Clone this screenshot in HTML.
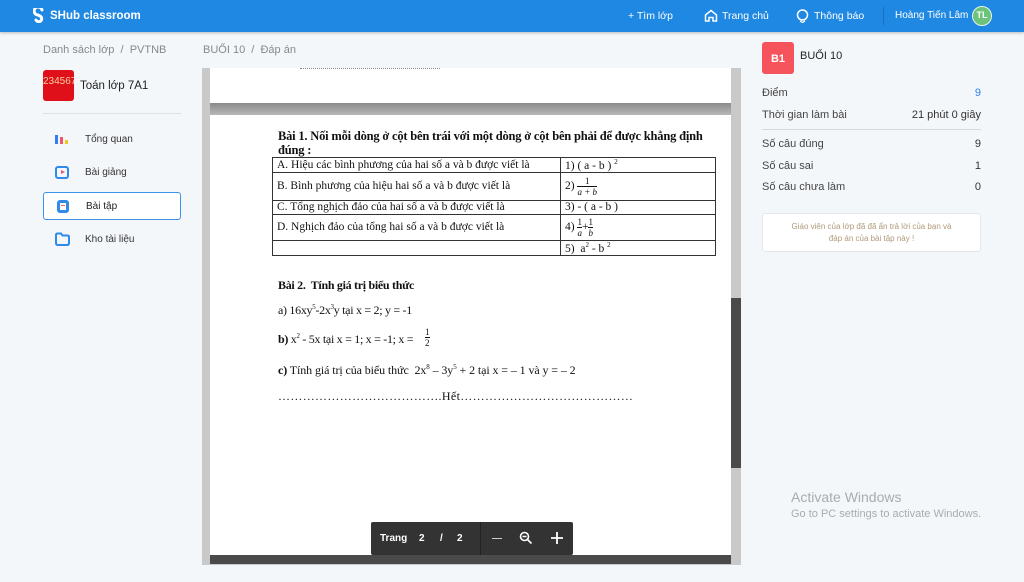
<!DOCTYPE html>
<html><head><meta charset="utf-8"><style>
*{margin:0;padding:0;box-sizing:border-box}
body{width:1024px;height:582px;background:#f4f7fa;font-family:"Liberation Sans",sans-serif;position:relative;overflow:hidden;color:#333}
.hd{position:absolute;left:0;top:0;width:1024px;height:32px;background:#1f88e2;box-shadow:0 1px 3px rgba(0,0,0,.25);color:#fff;font-size:10.5px}
.hd span{position:absolute;top:10px}
.a{position:absolute}
.tnr{font-family:"Liberation Serif",serif;color:#111}
table{border-collapse:collapse}
td{border:1px solid #333;font-size:11.5px;padding:0 4px;font-family:"Liberation Serif",serif;color:#111;letter-spacing:0px;white-space:nowrap}
.nav{position:absolute;left:43px;width:138px;height:28px;font-size:10px;color:#333}
.nav span{position:absolute;left:42px;top:8px}
.row{position:absolute;left:762px;width:219px;font-size:11px;color:#444}
.row b{position:absolute;right:0;font-weight:normal;color:#333}
</style></head><body>
<div class="hd">
<svg class="a" style="left:33px;top:8px" width="12" height="15" viewBox="0 0 12 15"><path d="M9 2 A4 4 0 1 0 5 7 L7 8 A3 3 0 1 1 3 12" stroke="#fff" stroke-width="3" fill="none" stroke-linecap="round"/></svg>
<span style="left:50px;font-size:11.5px;font-weight:bold">SHub classroom</span>
<span style="left:628px">+ Tìm lớp</span>
<svg class="a" style="left:704px;top:9px" width="14" height="13" viewBox="0 0 14 13"><path d="M1.5 6 L7 1.5 L12.5 6 V12 H9 V8.5 H5 V12 H1.5Z" stroke="#fff" stroke-width="1.5" fill="none"/></svg>
<span style="left:722px">Trang chủ</span>
<svg class="a" style="left:796px;top:9px" width="13" height="14" viewBox="0 0 13 14"><circle cx="6.5" cy="6" r="5" stroke="#fff" stroke-width="1.5" fill="none"/><path d="M4 12 L6.5 13.5 L9 12" stroke="#fff" stroke-width="1.3" fill="none"/></svg>
<span style="left:814px">Thông báo</span>
<div class="a" style="left:883px;top:7px;width:1px;height:18px;background:#1a6fc0"></div>
<span style="left:895px;font-size:10px">Hoàng Tiến Lâm</span>
<div class="a" style="left:972px;top:6px;width:20px;height:20px;border-radius:50%;background:#6cc37a;border:1.5px solid #e8f4ea;font-size:9px;font-weight:bold;text-align:center;line-height:17px">TL</div>
</div>

<div class="a" style="left:43px;top:44px;font-size:11px;color:#888">Danh sách lớp &nbsp;/ &nbsp;PVTNB</div>
<div class="a" style="left:203px;top:44px;font-size:11px;color:#888">BUỔI 10 &nbsp;/ &nbsp;Đáp án</div>
<div class="a" style="left:43px;top:70px;width:31px;height:31px;background:#e0101a;border-radius:3px;color:#f2d0a0;font-size:10px;line-height:24px;overflow:hidden">234567</div>
<div class="a" style="left:80px;top:80px;font-size:11.5px;color:#222">Toán lớp 7A1</div>
<div class="a" style="left:43px;top:113px;width:138px;height:1px;background:#dde2e8"></div>

<div class="nav" style="top:126px"><div class="a" style="left:12px;top:9px;width:3px;height:9px;background:#2f7ef0"></div><div class="a" style="left:17px;top:11px;width:3px;height:7px;background:#f0556a"></div><div class="a" style="left:22px;top:14px;width:3px;height:4px;background:#f5c518"></div><span>Tổng quan</span></div>
<div class="nav" style="top:159px"><div class="a" style="left:12px;top:7px;width:14px;height:13px;border:2px solid #2f8ae8;border-radius:3px"></div><div class="a" style="left:18px;top:11px;border-left:4px solid #f0556a;border-top:2.5px solid transparent;border-bottom:2.5px solid transparent"></div><span>Bài giảng</span></div>
<div class="nav" style="top:192px;background:#fff;border:1px solid #3d94ea;border-radius:3px"><div class="a" style="left:13px;top:7px;width:12px;height:13px;background:#2f8ae8;border-radius:3px"></div><div class="a" style="left:16px;top:10px;width:6px;height:7px;background:#fff"></div><div class="a" style="left:17px;top:12px;width:4px;height:1px;background:#f0556a"></div><span style="color:#222">Bài tập</span></div>
<div class="nav" style="top:226px"><svg class="a" style="left:11px;top:6px" width="17" height="15" viewBox="0 0 17 15"><path d="M2 3 Q2 1.5 3.5 1.5 H7 L8.5 3.5 H13.5 Q15 3.5 15 5 V11 Q15 13 13 13 H4 Q2 13 2 11Z" stroke="#2f8ae8" stroke-width="2" fill="none"/></svg><span>Kho tài liệu</span></div>

<!-- viewer -->
<div class="a" style="left:202px;top:68px;width:539px;height:497px;background:#c9c9c9"></div>
<div class="a" style="left:210px;top:68px;width:521px;height:35px;background:#fff"></div>
<div class="a" style="left:300px;top:68px;width:140px;height:2px;border-top:1px dotted #888"></div>
<div class="a" style="left:210px;top:103px;width:521px;height:12px;background:linear-gradient(#8a8a8a,#b8b8b8)"></div>
<div class="a" style="left:210px;top:115px;width:521px;height:440px;background:#fff"></div>
<div class="a" style="left:210px;top:555px;width:521px;height:9px;background:#4a4a4a"></div>
<div class="a" style="left:731px;top:298px;width:10px;height:170px;background:#4a4a4a"></div>

<div class="a tnr" style="left:278px;top:129px;font-size:12.5px;font-weight:bold;line-height:14px;width:460px;letter-spacing:-0.2px">Bài 1. Nối mỗi dòng ở cột bên trái với một dòng ở cột bên phải để được khẳng định<br>đúng :</div>
<table class="a" style="left:272px;top:157px;width:444px">
<tr style="height:13px"><td style="width:288px">A. Hiệu các bình phương của hai số a và b được viết là</td><td>1) ( a - b ) <sup style="font-size:7px">2</sup></td></tr>
<tr style="height:28px"><td>B. Bình phương của hiệu hai số a và b được viết là</td><td>2) <span style="display:inline-block;vertical-align:middle;text-align:center;font-size:9px;line-height:10px"><span style="border-bottom:1px solid #111;display:block;padding:0 2px">1</span><i>a + b</i></span></td></tr>
<tr style="height:14px"><td>C. Tổng nghịch đảo của hai số a và b được viết là</td><td>3) - ( a - b )</td></tr>
<tr style="height:26px"><td>D. Nghịch đảo của tổng hai số a và b được viết là</td><td>4) <span style="display:inline-block;vertical-align:middle;text-align:center;font-size:9px;line-height:10px"><span style="border-bottom:1px solid #111;display:block">1</span><i>a</i></span>+<span style="display:inline-block;vertical-align:middle;text-align:center;font-size:9px;line-height:10px"><span style="border-bottom:1px solid #111;display:block">1</span><i>b</i></span></td></tr>
<tr style="height:14px"><td></td><td>5)&nbsp; a<sup style="font-size:7px">2</sup> - b <sup style="font-size:7px">2</sup></td></tr>
</table>
<div class="a tnr" style="left:278px;top:278px;font-size:12px;font-weight:bold;letter-spacing:-0.3px">Bài 2.&nbsp; Tính giá trị biểu thức</div>
<div class="a tnr" style="left:278px;top:303px;font-size:12px;letter-spacing:-0.3px">a) 16xy<sup style="font-size:7px">5</sup>-2x<sup style="font-size:7px">3</sup>y tại x = 2; y = -1</div>
<div class="a tnr" style="left:278px;top:332px;font-size:12px;letter-spacing:-0.3px"><b>b)</b> x<sup style="font-size:7px">2</sup> - 5x tại x = 1; x = -1; x = </div>
<div class="a tnr" style="left:425px;top:327px;font-size:9px;text-align:center;line-height:10px"><div style="border-bottom:1px solid #111">1</div>2</div>
<div class="a tnr" style="left:278px;top:363px;font-size:12px;letter-spacing:-0.1px"><b>c)</b> Tính giá trị của biểu thức&nbsp; 2x<sup style="font-size:7px">8</sup> – 3y<sup style="font-size:7px">5</sup> + 2 tại x = – 1 và y = – 2</div>
<div class="a tnr" style="left:278px;top:389px;font-size:12px;letter-spacing:0.35px;white-space:nowrap">………………………………….Hết……………………………………</div>

<div class="a" style="left:371px;top:522px;width:202px;height:33px;background:#333;border-radius:2px;color:#fff;font-size:10px;font-weight:bold">
<span class="a" style="left:9px;top:11px">Trang</span><span class="a" style="left:48px;top:11px">2</span><span class="a" style="left:69px;top:11px">/</span><span class="a" style="left:86px;top:11px">2</span>
<div class="a" style="left:109px;top:0;width:1px;height:33px;background:#222"></div>
<div class="a" style="left:121px;top:16px;width:10px;height:1px;background:#ccc"></div>
<svg class="a" style="left:148px;top:9px" width="14" height="14" viewBox="0 0 14 14"><circle cx="5.5" cy="5.5" r="4" stroke="#fff" stroke-width="1.6" fill="none"/><path d="M8.5 8.5 L12.5 12.5 M3.5 5.5 H7.5" stroke="#fff" stroke-width="1.6"/></svg>
<svg class="a" style="left:180px;top:10px" width="12" height="12" viewBox="0 0 12 12"><path d="M6 0 V12 M0 6 H12" stroke="#fff" stroke-width="1.8"/></svg>
</div>

<!-- right -->
<div class="a" style="left:762px;top:42px;width:32px;height:32px;background:#f5545d;border-radius:3px;color:#fff;font-size:11px;font-weight:bold;text-align:center;line-height:34px">B1</div>
<div class="a" style="left:800px;top:50px;font-size:11px;color:#222">BUỔI 10</div>
<div class="row" style="top:87px">Điểm<b style="color:#2f7ef0">9</b></div>
<div class="row" style="top:109px">Thời gian làm bài<b>21 phút 0 giây</b></div>
<div class="a" style="left:762px;top:129px;width:219px;height:1px;background:#d5d9de"></div>
<div class="row" style="top:138px">Số câu đúng<b>9</b></div>
<div class="row" style="top:160px">Số câu sai<b>1</b></div>
<div class="row" style="top:181px">Số câu chưa làm<b>0</b></div>
<div class="a" style="left:762px;top:213px;width:219px;height:39px;background:#fff;border:1px solid #e3e6ea;border-radius:3px;font-size:8px;color:#b09a7a;text-align:center;line-height:12px;padding-top:7px">Giáo viên của lớp đã đã ẩn trả lời của bạn và<br>đáp án của bài tập này !</div>
<div class="a" style="left:791px;top:489px;font-size:14px;color:#a8abb0">Activate Windows</div>
<div class="a" style="left:791px;top:508px;font-size:11px;color:#a8abb0">Go to PC settings to activate Windows.</div>
</body></html>
